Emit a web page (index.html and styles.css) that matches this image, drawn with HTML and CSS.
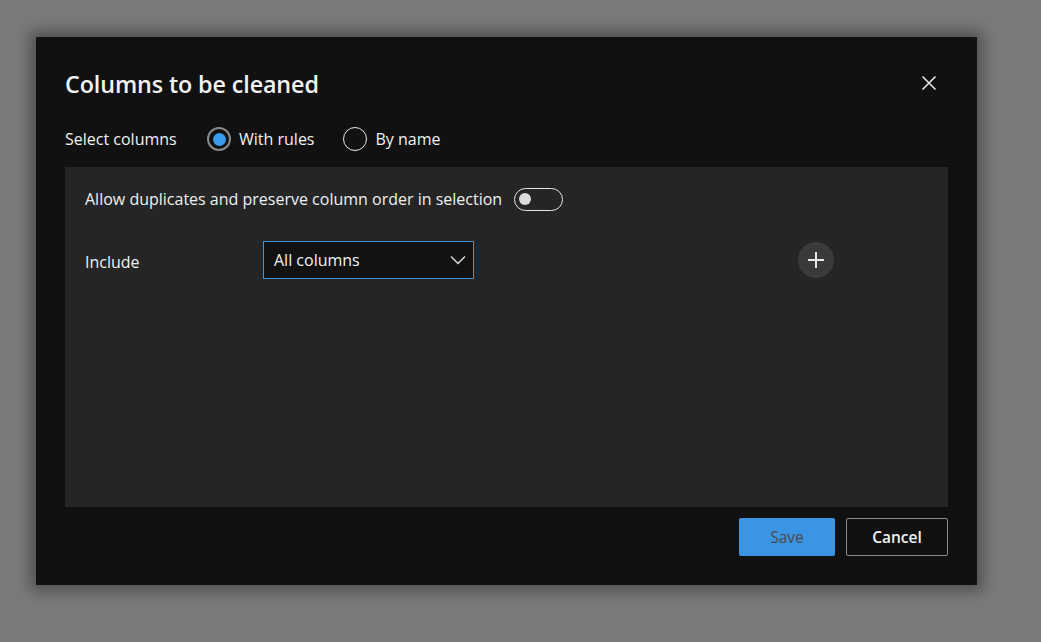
FILE: index.html
```html
<!DOCTYPE html>
<html>
<head>
<meta charset="utf-8">
<link rel="stylesheet" href="styles.css">
</head>
<body>
<div class="backdrop">
  <div class="dialog">
    <div class="header">
      <h1 class="title">Columns to be cleaned</h1>
      <button class="close" aria-label="Close">
        <svg width="16" height="16" viewBox="0 0 16 16"><path d="M1.5 1.5 L14.5 14.5 M14.5 1.5 L1.5 14.5" stroke="#e6e6e6" stroke-width="1.6" fill="none"/></svg>
      </button>
    </div>
    <div class="select-row">
      <span class="label">Select columns</span>
      <label class="radio checked"><span class="circle"><span class="dot"></span></span>With rules</label>
      <label class="radio"><span class="circle"></span>By name</label>
    </div>
    <div class="panel">
      <div class="toggle-row">
        <span>Allow duplicates and preserve column order in selection</span>
        <span class="toggle"><span class="knob"></span></span>
      </div>
      <div class="include-row">
        <span class="include-label">Include</span>
        <div class="dropdown">
          <span>All columns</span>
          <svg width="16" height="10" viewBox="0 0 16 10"><path d="M1 1.5 L8 8.5 L15 1.5" stroke="#e0e0e0" stroke-width="1.3" fill="none"/></svg>
        </div>
        <button class="add" aria-label="Add">
          <svg width="18" height="18" viewBox="0 0 18 18"><path d="M9 1 V17 M1 9 H17" stroke="#e8e8e8" stroke-width="2" fill="none"/></svg>
        </button>
      </div>
    </div>
    <div class="footer">
      <button class="btn save">Save</button>
      <button class="btn cancel">Cancel</button>
    </div>
  </div>
</div>
</body>
</html>
```
FILE: styles.css
```css
html, body {
  margin: 0;
  padding: 0;
}
body {
  width: 1041px;
  height: 642px;
  background: #7a7a7a;
  font-family: "Open Sans", "Noto Sans", sans-serif;
  overflow: hidden;
}
.backdrop {
  padding: 37px 0 0 36px;
}
.dialog {
  width: 941px;
  height: 548px;
  box-sizing: border-box;
  background: #111111;
  box-shadow: 0 0 14px 6px rgba(0,0,0,0.35);
  padding: 0 29px;
  color: #f0f0f0;
}
.header {
  display: flex;
  align-items: center;
  justify-content: space-between;
  height: 94px;
}
.title {
  margin: 0;
  font-size: 23.3px;
  font-weight: 600;
  letter-spacing: -0.1px;
  color: #f2f2f2;
}
.close {
  background: none;
  border: 0;
  padding: 0;
  width: 16px;
  height: 16px;
  margin-right: 11px;
  margin-top: -2px;
  display: flex;
}
.select-row {
  display: flex;
  align-items: center;
  height: 28px;
  font-size: 16px;
  margin-top: -6px;
}
.label {
  width: 142px;
}
.radio {
  display: flex;
  align-items: center;
  gap: 8px;
  margin-right: 29px;
}
.circle {
  width: 24px;
  height: 24px;
  border: 1.5px solid #e8e8e8;
  border-radius: 50%;
  box-sizing: border-box;
  display: flex;
  align-items: center;
  justify-content: center;
}
.radio.checked .circle {
  border-color: #8a8a8a;
  border-width: 2px;
}
.dot {
  width: 13px;
  height: 13px;
  border-radius: 50%;
  background: #3a9bec;
}
.panel {
  margin-top: 14px;
  height: 340px;
  background: #252525;
  padding: 20px 20px 0;
  box-sizing: border-box;
}
.toggle-row {
  display: flex;
  align-items: center;
  gap: 12px;
  font-size: 16px;
  height: 24px;
}
.toggle {
  width: 49px;
  height: 23px;
  box-sizing: border-box;
  border: 1.5px solid #e6e6e6;
  border-radius: 12px;
  display: flex;
  align-items: center;
  padding-left: 4px;
}
.knob {
  width: 12px;
  height: 12px;
  border-radius: 50%;
  background: #dcdcdc;
}
.include-row {
  display: flex;
  align-items: center;
  margin-top: 30px;
  font-size: 16px;
}
.include-label {
  width: 178px;
  padding-top: 3px;
}
.dropdown {
  width: 211px;
  height: 38px;
  box-sizing: border-box;
  border: 1.5px solid #3d93dc;
  background: #121212;
  display: flex;
  align-items: center;
  justify-content: space-between;
  padding: 0 7px 0 10px;
}
.add {
  margin-left: 324px;
  width: 36px;
  height: 36px;
  border-radius: 50%;
  border: 0;
  background: #3a3a3a;
  display: flex;
  align-items: center;
  justify-content: center;
  padding: 0;
}
.footer {
  display: flex;
  justify-content: flex-end;
  gap: 11px;
  margin-top: 11px;
}
.btn {
  height: 38px;
  font-family: "Open Sans", "Noto Sans", sans-serif;
  font-size: 15.5px;
  box-sizing: border-box;
  padding: 0;
}
.save {
  width: 96px;
  background: #3a95e4;
  border: 0;
  border-radius: 2px;
  color: #4a4a4a;
}
.cancel {
  width: 102px;
  background: #111;
  border: 1.5px solid #8a8a8a;
  border-radius: 2px;
  color: #f2f2f2;
  font-weight: 600;
}
```
